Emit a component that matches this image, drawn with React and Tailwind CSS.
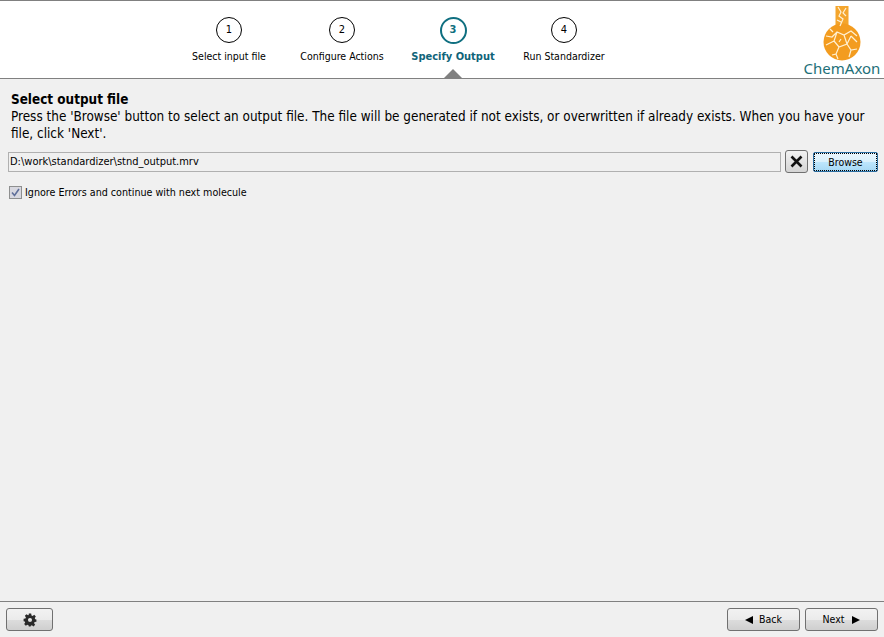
import React from "react";

const font = "font-['DejaVu_Sans',sans-serif] font-stretch-condensed";

const steps = [
  { n: 1, label: "Select input file", width: "w-[112px]" },
  { n: 2, label: "Configure Actions", width: "w-[114px]" },
  { n: 3, label: "Specify Output", width: "w-[108px]", active: true },
  { n: 4, label: "Run Standardizer", width: "w-[114px]" },
];

const Step = ({ n, label, width, active }) => (
  <div className={`relative flex h-full flex-col items-center pt-[16px] ${width}`}>
    {active ? (
      <div className="flex h-[27px] w-[27px] items-center justify-center rounded-full border-[2px] border-[#0f6f80] text-[11px] font-bold text-[#0f6f80]">
        {n}
      </div>
    ) : (
      <div className="flex h-[26px] w-[26px] items-center justify-center rounded-full border border-black text-[11px] text-black">
        {n}
      </div>
    )}
    <div
      className={`mt-[5px] whitespace-nowrap leading-[16px] ${
        active ? "text-[11px] font-bold text-[#0f6479]" : "text-[10.5px] text-black"
      }`}
    >
      {label}
    </div>
    {active && (
      <div className="absolute bottom-[-1px] left-1/2 h-0 w-0 -translate-x-1/2 border-x-[10px] border-b-[10px] border-x-transparent border-b-[#808080]" />
    )}
  </div>
);

const Logo = () => (
  <div className="flex w-[80px] flex-col items-center">
    <svg width="40" height="56" viewBox="0 0 40 56" className="mt-[4px] -mb-[1px]">
      <rect x="13.5" y="1" width="13" height="20" fill="#f4a52c" />
      <circle cx="20" cy="37" r="18.5" fill="#f39c1f" />
      <path
        d="M16 2l3 5-2 4 4 3-3 7M24 3l-3 5 3 3M15 15l4 2M4 31l6 1 5-5 7 3 7-4 6 5M15 27l-3 9 5 6 8-3 4-8M22 30l3 9M12 36l-8 4M17 42l-3 7-4 1M14 49l2 5M25 39l4 6 6-1M29 45l-2 7M29 31l6 6M8 24l3 3M19 34l-2 3"
        fill="none"
        stroke="#fff0d2"
        strokeWidth="1.2"
      />
    </svg>
    <div className="whitespace-nowrap font-['Noto_Sans',sans-serif] text-[15px] leading-[17px] text-[#1d6f78] [font-stretch:normal]">
      ChemAxon
    </div>
  </div>
);

const GrayButton = ({ className = "", children }) => (
  <button
    className={`flex h-[23px] items-center justify-center rounded-[3px] border border-[#707070] bg-[linear-gradient(#f2f2f2_0%,#ebebeb_50%,#dddddd_50%,#cfcfcf_100%)] text-[10.5px] text-black ${className}`}
  >
    {children}
  </button>
);

const Gear = () => (
  <svg width="14" height="14" viewBox="0 0 24 24" fill="#2a2a2a">
    <path
      fillRule="evenodd"
      d="M10 1h4l.6 3.2 1.9.8 2.7-1.8 2.8 2.8-1.8 2.7.8 1.9L23 11v4l-3.2.6-.8 1.9 1.8 2.7-2.8 2.8-2.7-1.8-1.9.8L13 23h-3l-.6-2.2-1.9-.8-2.7 1.8L2 19l1.8-2.7-.8-1.9L1 14v-4l3.2-.6.8-1.9L3.2 4.8 6 2l2.7 1.8 1-.4zM12 8.5a3.5 3.5 0 100 7 3.5 3.5 0 000-7z"
    />
  </svg>
);

const App = () => {
  return (
    <div className={`flex h-[637px] w-[884px] flex-col overflow-hidden bg-[#f0f0f0] ${font}`}>
      <header className="flex h-[79px] shrink-0 border-y border-t-[#808080] border-b-[#808080] bg-white">
        <div className="ml-[173px] flex h-full">
          {steps.map((s) => (
            <Step key={s.n} {...s} />
          ))}
        </div>
        <div className="ml-auto mr-[2px]">
          <Logo />
        </div>
      </header>

      <main className="flex-1 pt-[12px]">
        <div className="px-[11px] text-[13.42px] leading-[17px] text-black">
          <div className="font-bold">Select output file</div>
          <p>
            Press the 'Browse' button to select an output file. The file will be generated if not exists, or
            overwritten if already exists. When you have your file, click 'Next'.
          </p>
        </div>

        <div className="mt-[8px] flex items-center pl-[8px] pr-[6px]">
          <div className="flex h-[20px] w-[773px] items-center border border-[#b0b0b0] pl-[1px] pt-[2px] text-[11px] text-black">
            D:\work\standardizer\stnd_output.mrv
          </div>
          <button className="ml-[4px] flex h-[23px] w-[23px] items-center justify-center rounded-[3px] border border-[#707070] bg-[linear-gradient(#f2f2f2,#d4d4d4)]">
            <svg width="13" height="13" viewBox="0 0 13 13">
              <path d="M1.5 1.5l10 10M11.5 1.5l-10 10" stroke="#111" strokeWidth="2.6" />
            </svg>
          </button>
          <button className="ml-[5px] flex h-[20px] w-[65px] items-center justify-center rounded-[2px] border border-[#2c6fa3] bg-[linear-gradient(#eaf6fd_0%,#d9f0fc_50%,#bee6fd_50%,#a7d9f5_100%)] pt-[2px] text-[10.5px] text-black outline-1 -outline-offset-2 outline-dotted outline-black">
            Browse
          </button>
        </div>

        <label className="ml-[9px] mt-[12px] flex items-center text-[10.65px] text-black">
          <span className="flex h-[13px] w-[13px] items-center justify-center border border-[#8e8f8f] bg-[#d8d8e0]">
            <svg width="9" height="9" viewBox="0 0 9 9">
              <path d="M1 4.5l2.5 3L8 1" fill="none" stroke="#5f6f9a" strokeWidth="1.6" />
            </svg>
          </span>
          <span className="ml-[3px]">Ignore Errors and continue with next molecule</span>
        </label>
      </main>

      <footer className="flex h-[36px] shrink-0 items-start justify-between border-t border-[#808080] pl-[6px] pr-[6px] pt-[6px]">
        <GrayButton className="w-[47px]">
          <Gear />
        </GrayButton>
        <div className="flex gap-[5px]">
          <GrayButton className="w-[73px] gap-[6px]">
            <span className="h-0 w-0 border-y-[4px] border-r-[8px] border-y-transparent border-r-black" />
            <span className="pt-[1px]">Back</span>
          </GrayButton>
          <GrayButton className="w-[73px] gap-[8px]">
            <span className="pt-[1px]">Next</span>
            <span className="h-0 w-0 border-y-[4px] border-l-[8px] border-y-transparent border-l-black" />
          </GrayButton>
        </div>
      </footer>
    </div>
  );
};

export default App;
